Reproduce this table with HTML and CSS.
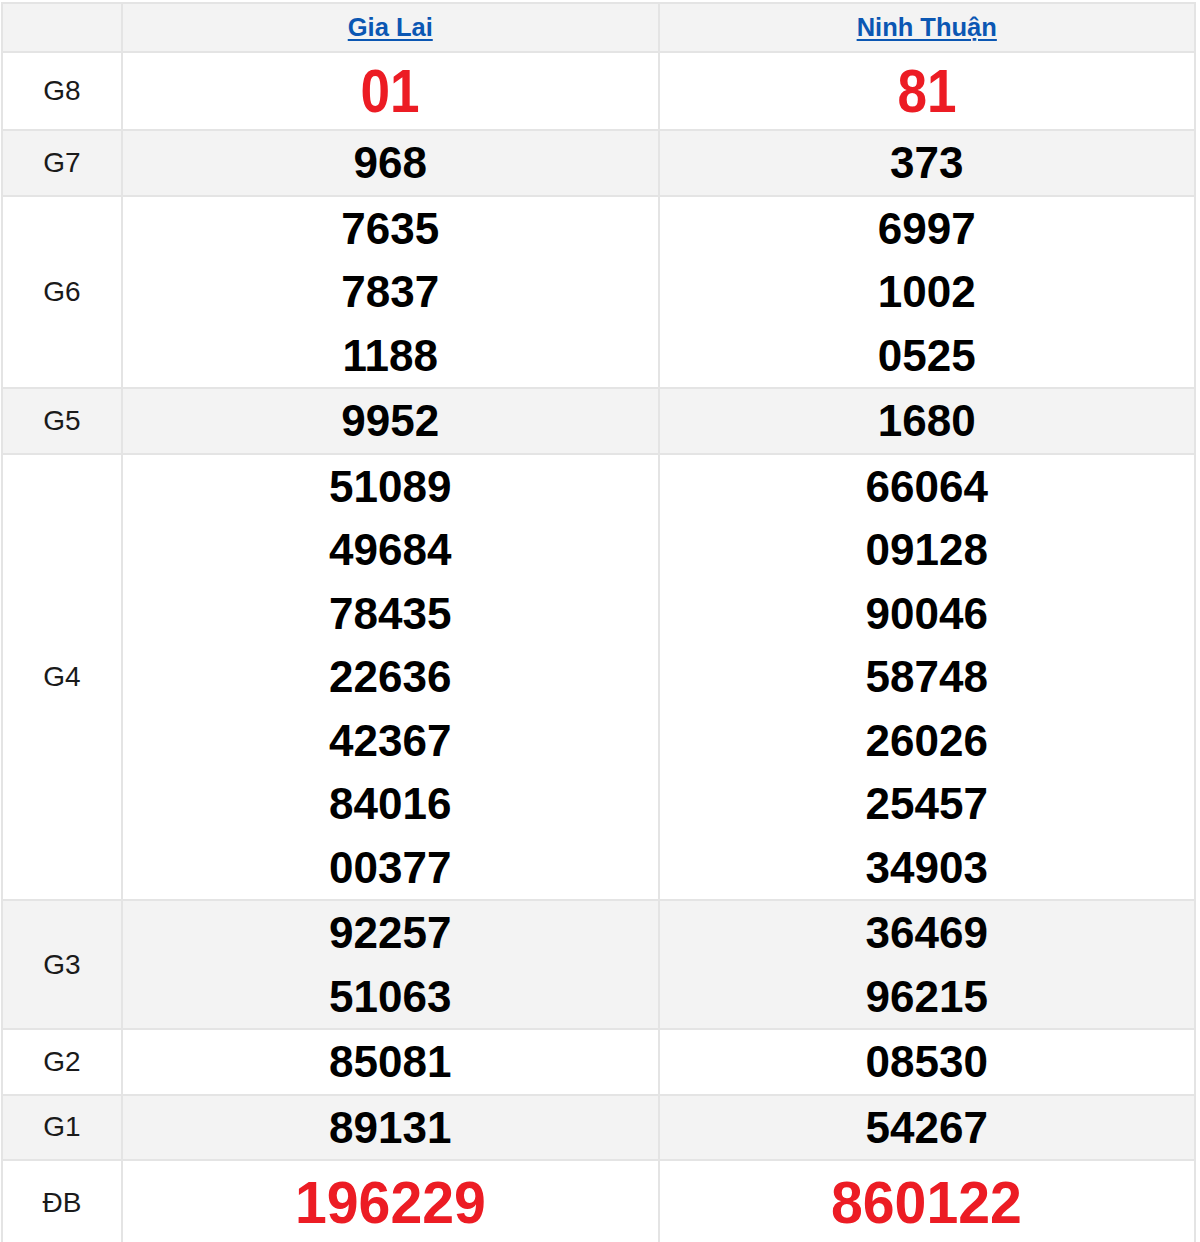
FILE: index.html
```html
<!DOCTYPE html>
<html lang="vi">
<head>
<meta charset="utf-8">
<title>Kết quả xổ số</title>
<link rel="stylesheet" href="styles.css">
</head>
<body>
<table class="kq">
  <colgroup>
    <col class="c-label">
    <col class="c-prov">
    <col class="c-prov">
  </colgroup>
  <thead>
    <tr class="row-head">
      <th></th>
      <th><a href="#" class="prov">Gia Lai</a></th>
      <th><a href="#" class="prov">Ninh Thuận</a></th>
    </tr>
  </thead>
  <tbody>
    <tr class="row-g8">
      <td class="label">G8</td>
      <td><div class="num red g8"><span class="squeeze">01</span></div></td>
      <td><div class="num red g8"><span class="squeeze">81</span></div></td>
    </tr>
    <tr class="alt">
      <td class="label">G7</td>
      <td><div class="num">968</div></td>
      <td><div class="num">373</div></td>
    </tr>
    <tr>
      <td class="label">G6</td>
      <td><div class="num">7635</div><div class="num">7837</div><div class="num">1188</div></td>
      <td><div class="num">6997</div><div class="num">1002</div><div class="num">0525</div></td>
    </tr>
    <tr class="alt">
      <td class="label">G5</td>
      <td><div class="num">9952</div></td>
      <td><div class="num">1680</div></td>
    </tr>
    <tr>
      <td class="label">G4</td>
      <td><div class="num">51089</div><div class="num">49684</div><div class="num">78435</div><div class="num">22636</div><div class="num">42367</div><div class="num">84016</div><div class="num">00377</div></td>
      <td><div class="num">66064</div><div class="num">09128</div><div class="num">90046</div><div class="num">58748</div><div class="num">26026</div><div class="num">25457</div><div class="num">34903</div></td>
    </tr>
    <tr class="alt">
      <td class="label">G3</td>
      <td><div class="num">92257</div><div class="num">51063</div></td>
      <td><div class="num">36469</div><div class="num">96215</div></td>
    </tr>
    <tr>
      <td class="label">G2</td>
      <td><div class="num">85081</div></td>
      <td><div class="num">08530</div></td>
    </tr>
    <tr class="alt">
      <td class="label">G1</td>
      <td><div class="num">89131</div></td>
      <td><div class="num">54267</div></td>
    </tr>
    <tr>
      <td class="label">ĐB</td>
      <td><div class="num red db"><span class="squeeze-db">196229</span></div></td>
      <td><div class="num red db"><span class="squeeze-db">860122</span></div></td>
    </tr>
  </tbody>
</table>
</body>
</html>
```

FILE: styles.css
```css
html, body {
  margin: 0;
  padding: 0;
  background: #ffffff;
}

body {
  font-family: "Liberation Sans", Arial, sans-serif;
  color: #000;
}

.kq {
  border-collapse: collapse;
  table-layout: fixed;
  width: 1193px;
  margin: 2px 0 0 1px;
}

.c-label { width: 120px; }
.c-prov { width: 536.5px; }

.kq th,
.kq td {
  border: 2px solid #e4e4e4;
  padding: 0;
  text-align: center;
  vertical-align: middle;
}

.row-head th {
  background: #f3f3f3;
  height: 47px;
  font-size: 25.5px;
  font-weight: bold;
  line-height: 47px;
}

.prov {
  color: #0b57b3;
  text-decoration: underline;
  text-underline-offset: 3px;
  text-decoration-thickness: 2px;
}

.alt td {
  background: #f3f3f3;
}

.label {
  font-size: 28px;
  color: #1a1a1a;
}

.num {
  font-size: 44px;
  font-weight: bold;
  line-height: 63.5px;
}

.num.g8 {
  font-size: 61px;
  line-height: 76px;
}

.num.db {
  font-size: 59px;
  line-height: 84px;
}

.squeeze {
  display: inline-block;
  transform: scaleX(0.87);
}

.squeeze-db {
  display: inline-block;
  transform: scaleX(0.97);
}

.red {
  color: #ec1c24;
}
```
